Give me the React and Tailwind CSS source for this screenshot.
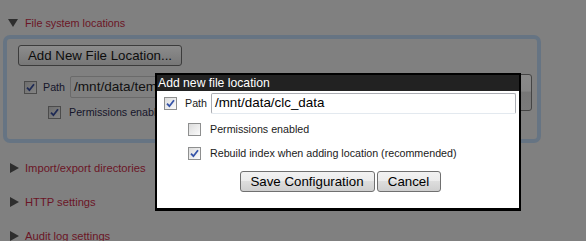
import React from 'react';

function Check({ checked, dim }) {
  // windows-style checkbox, dimmed when it sits under the modal overlay
  const box = dim
    ? 'border-[#4b4b4b] bg-gradient-to-br from-[#6e6e6e] to-[#838383]'
    : 'border-[#8e8f8f] bg-gradient-to-br from-[#dcdcdc] to-[#fbfbfb]';
  return (
    <span className={`flex h-[13px] w-[13px] shrink-0 items-center justify-center border ${box}`}>
      {checked && (
        <svg width="9" height="9" viewBox="0 0 9 9">
          <path d="M1 4.6 L3.4 7.2 L8 1.2" fill="none" stroke={dim ? '#1e2a55' : '#3553a8'} strokeWidth="1.8" />
        </svg>
      )}
    </span>
  );
}

function Section({ label, open }) {
  return (
    <div className="flex h-[34px] items-center pl-[6px]">
      {open ? (
        <span className="h-0 w-0 border-x-[5px] border-t-[8px] border-x-transparent border-t-[#2e2e2e]" />
      ) : (
        <span className="ml-[1px] h-0 w-0 border-y-[5px] border-l-[9px] border-y-transparent border-l-[#2e2e2e]" />
      )}
      <span className="ml-[6px] text-[11.2px] text-[#6b1526]">{label}</span>
    </div>
  );
}

export default function App() {
  return (
    <div className="relative h-[241px] w-full overflow-hidden bg-[#808080] font-['Liberation_Sans',Arial,sans-serif]">
      <div className="px-[3px] pt-[16px]">
        <div className="flex h-[14px] items-center pl-[5px]">
          <span className="h-0 w-0 border-x-[5px] border-t-[8px] border-x-transparent border-t-[#2e2e2e]" />
          <span className="ml-[7px] text-[10.8px] text-[#6b1526]">File system locations</span>
        </div>

        {/* locations panel */}
        <div className="mt-[5px] h-[108px] w-[538px] rounded-[7px] border-4 border-[#667483] pl-[11px] pr-[5px] pt-[4px]">
          <button className="h-[21px] w-[164px] rounded-[3px] border border-[#3c3c3c] bg-gradient-to-b from-[#8c8c8c] to-[#777] text-[13.3px] text-[#0d0d0d]">
            Add New File Location...
          </button>
          <div className="mt-[7px] flex items-start gap-[8px]">
            <div className="flex flex-1 flex-col">
              <div className="mt-[2px] flex h-[22px] items-center">
                <span className="ml-[6px]"><Check checked dim /></span>
                <span className="ml-[6px] text-[10.7px] text-[#15152a]">Path</span>
                <div className="ml-[5px] mr-[5px] flex h-[22px] flex-1 items-center rounded-[2px] border border-[#6a6a6a] pl-[3px] text-[13.6px] text-[#111]">
                  /mnt/data/temp
                </div>
              </div>
              <div className="mt-[7px] flex h-[14px] items-center pl-[30px]">
                <Check checked dim />
                <span className="ml-[8px] text-[10.7px] text-[#15152a]">Permissions enabled</span>
              </div>
            </div>
            <button className="h-[37px] w-[72px] rounded-[3px] border border-[#444] bg-[linear-gradient(#8a8a8a_0,#868686_45%,#777_50%,#7a7a7a_100%)]" />
            <button className="h-[37px] w-[67px] rounded-[3px] border border-[#444] bg-[linear-gradient(#8a8a8a_0,#868686_45%,#777_50%,#7a7a7a_100%)]" />
          </div>
        </div>

        <div className="mt-[8px]">
          <Section label="Import/export directories" />
          <Section label="HTTP settings" />
          <Section label="Audit log settings" />
        </div>
      </div>

      {/* modal */}
      <div className="absolute left-[155px] top-[73px] flex h-[138px] w-[366px] flex-col border-2 border-b-[3px] border-black bg-white">
        <div className="flex h-[16px] items-center bg-[#222] pl-[1px] text-[12.2px] text-white">
          Add new file location
        </div>
        <div className="flex flex-1 flex-col pl-[7px] pr-[3px]">
          <div className="mt-[2px] flex h-[21px] items-center">
            <Check checked />
            <span className="ml-[8px] text-[10.7px] text-[#1a1a1a]">Path</span>
            <div className="ml-[4px] flex h-[21px] flex-1 items-center rounded-[2px] border border-[#abadb3] border-b-[#e3e9ef] pl-[3px] text-[13.4px] text-black">
              /mnt/data/clc_data
            </div>
          </div>
          <div className="mt-[8px] flex h-[14px] items-center pl-[24px]">
            <Check />
            <span className="ml-[9px] text-[10.7px] text-[#1a1a1a]">Permissions enabled</span>
          </div>
          <div className="mt-[10px] flex h-[14px] items-center pl-[24px]">
            <Check checked />
            <span className="ml-[9px] text-[10.7px] text-[#1a1a1a]">Rebuild index when adding location (recommended)</span>
          </div>
          <div className="mt-[11px] flex justify-center gap-[2px]">
            <button className="h-[21px] w-[135px] rounded-[3px] border border-[#707070] bg-[linear-gradient(#f2f2f2_0,#ebebeb_50%,#dddddd_50%,#cfcfcf_100%)] text-[13.3px] text-black">
              Save Configuration
            </button>
            <button className="h-[21px] w-[64px] rounded-[3px] border border-[#707070] bg-[linear-gradient(#f2f2f2_0,#ebebeb_50%,#dddddd_50%,#cfcfcf_100%)] text-[13.3px] text-black">
              Cancel
            </button>
          </div>
        </div>
      </div>
    </div>
  );
}
